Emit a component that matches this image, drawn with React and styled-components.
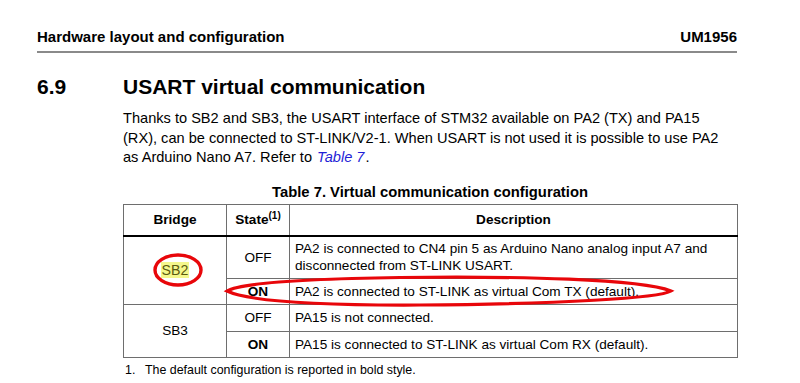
import React from 'react';
import styled, { createGlobalStyle } from 'styled-components';

const GlobalStyle = createGlobalStyle`
  html, body {
    margin: 0;
    padding: 0;
    background: #fff;
  }
  body {
    font-family: 'Liberation Sans', Arial, sans-serif;
    color: #000;
  }
`;

const Page = styled.div`
  position: relative;
  width: 800px;
  height: 383px;
  overflow: hidden;
  padding: 29px 63px 0 37px;
  box-sizing: border-box;
`;

const RunningHeader = styled.div`
  display: flex;
  justify-content: space-between;
  align-items: flex-end;
  height: 24px;
  padding-bottom: 6px;
  box-sizing: border-box;
  border-bottom: 2px solid #8a8a8a;
  font-size: 15px;
  line-height: 17px;
  font-weight: 700;
`;

const SectionTitle = styled.h2`
  display: flex;
  margin: 22px 0 0;
  font-size: 21px;
  font-weight: 700;
  line-height: 24px;
`;

const SectionNumber = styled.span`
  width: 86px;
  flex: none;
`;

const Body = styled.div`
  margin-left: 86px;
  width: 614px;
`;

const Paragraph = styled.p`
  margin: 10px 0 0;
  font-size: 14.6px;
  line-height: 19.6px;
`;

const Ref = styled.span`
  color: #1f1fd6;
  font-style: italic;
  margin-left: 1px;
  padding-right: 1px;
`;

const Caption = styled.div`
  margin-top: 16px;
  text-align: center;
  font-size: 14.8px;
  font-weight: 700;
  line-height: 17px;
`;

const Table = styled.table`
  width: 615px;
  margin-top: 3px;
  border-collapse: collapse;
  font-size: 13.6px;
  line-height: 17px;
  border: 1px solid #6e6e6e;
`;

const Head = styled.th`
  height: 30px;
  padding: 0 6px;
  border: 1px solid #6e6e6e;
  border-bottom: 2px solid #000;
  font-weight: 700;
  text-align: center;
  sup {
    font-size: 10px;
    vertical-align: 5px;
    line-height: 0;
  }
`;

const Cell = styled.td`
  padding: ${({ $tall }) => ($tall ? '3px 5px 4px' : '3px 5px')};
  height: ${({ $h }) => $h || 'auto'};
  border: 1px solid #6e6e6e;
  text-align: ${({ $center }) => ($center ? 'center' : 'left')};
  font-weight: ${({ $bold }) => ($bold ? 700 : 400)};
  vertical-align: middle;
`;

const Marked = styled.span`
  background: #f4f78c;
  color: #5a5a10;
  padding: 0 1px;
  font-size: 14.2px;
`;

const Footnote = styled.div`
  display: flex;
  margin: 5px 0 0 2px;
  font-size: 12.4px;
  line-height: 15px;
`;

const FootNum = styled.span`
  width: 20px;
`;

const Ink = styled.svg`
  position: absolute;
  left: 0;
  top: 0;
  pointer-events: none;
`;

const rows = [
  { bridge: 'SB2', state: 'OFF', text: 'PA2 is connected to CN4 pin 5 as Arduino Nano analog input A7 and disconnected from ST-LINK USART.', span: 2, h: '34px' },
  { state: 'ON', bold: true, text: 'PA2 is connected to ST-LINK as virtual Com TX (default).', h: '19px' },
  { bridge: 'SB3', state: 'OFF', text: 'PA15 is not connected.', span: 2, h: '20px' },
  { state: 'ON', bold: true, text: 'PA15 is connected to ST-LINK as virtual Com RX (default).', h: '19px' },
];

export default function App() {
  return (
    <>
      <GlobalStyle />
      <Page>
        <RunningHeader>
          <span>Hardware layout and configuration</span>
          <span>UM1956</span>
        </RunningHeader>

        <SectionTitle>
          <SectionNumber>6.9</SectionNumber>
          USART virtual communication
        </SectionTitle>

        <Body>
          <Paragraph>
            Thanks to SB2 and SB3, the USART interface of STM32 available on PA2 (TX) and PA15
            (RX), can be connected to ST-LINK/V2-1. When USART is not used it is possible to use PA2
            as Arduino Nano A7. Refer to <Ref>Table 7</Ref>.
          </Paragraph>

          <Caption>Table 7. Virtual communication configuration</Caption>

          <Table>
            <colgroup>
              <col style={{ width: '103px' }} />
              <col style={{ width: '63px' }} />
              <col />
            </colgroup>
            <thead>
              <tr>
                <Head>Bridge</Head>
                <Head>State<sup>(1)</sup></Head>
                <Head>Description</Head>
              </tr>
            </thead>
            <tbody>
              {rows.map((r, i) => (
                <tr key={i}>
                  {r.bridge && (
                    <Cell rowSpan={r.span} $center>
                      {r.bridge === 'SB2' ? <Marked>SB2</Marked> : r.bridge}
                    </Cell>
                  )}
                  <Cell $center $bold={r.bold} $h={r.h}>{r.state}</Cell>
                  <Cell $tall={r.span === 2 && i === 0}>{r.text}</Cell>
                </tr>
              ))}
            </tbody>
          </Table>

          <Footnote>
            <FootNum>1.</FootNum>
            The default configuration is reported in bold style.
          </Footnote>
        </Body>

        <Ink width="800" height="383" viewBox="0 0 800 383">
          <ellipse cx="178" cy="270" rx="23" ry="15" fill="none" stroke="#e8060a" strokeWidth="3.4" />
          <path
            d="M227 291 C 240 283, 300 279, 400 277.5 C 520 276, 640 279, 671 291 C 660 298, 560 304, 420 305 C 320 305.5, 250 302, 227 291 Z"
            fill="none"
            stroke="#e8060a"
            strokeWidth="3.2"
          />
        </Ink>
      </Page>
    </>
  );
}
